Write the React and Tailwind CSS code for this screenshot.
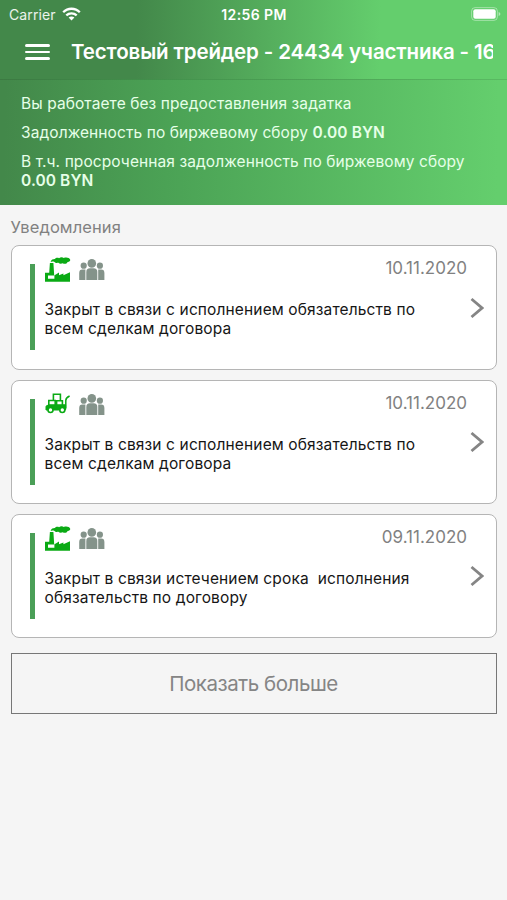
const FactoryIcon = () => (
  <svg className="h-[25px] w-[26px]" viewBox="0 0 26 25" fill="#0aaa14">
    <path
      fillRule="evenodd"
      d="M0 24.8V15.8H4.2L4.9 6H8.4L9.2 18.6L14 15.6V18.2L18.4 16.4V18.2L25 15.2V24.8ZM3 18.6V21.8H9.4V18.6Z"
    />
    <path d="M5.6 5C6.2 2.6 8 2 9.8 2C10.8 0.7 12.8 0.5 14 1.2C15.4 0 17.6 0 18.8 1C21 0 24.6 0.6 25.2 2.8C25.4 4.4 24 5 22.6 4.9C22 6.8 19.4 7.4 17.8 6.3C16 7 14.4 6.8 13.4 5.8C11.4 6.2 10.2 5.8 9.6 4.9C8 4.2 6.6 4.3 5.6 5Z" />
  </svg>
);

const LoaderIcon = () => (
  <svg className="h-[25px] w-[26px]" viewBox="0 0 26 25" fill="none" stroke="#0aaa14">
    <path d="M8.4 8.6V2.3H15.4V8.6M3.8 13.5V8.5H10.2V13.5M11.6 13.5V8.8H17.4V13.5" strokeWidth="1.6" />
    <path d="M1 18V14.2L3.6 12.8H20.6V18Z" fill="#0aaa14" />
    <path d="M20.8 16.6V8.4C20.8 6 22 5.2 24.6 4" strokeWidth="1.5" />
    <circle cx="5.5" cy="18" r="2.5" fill="#fff" strokeWidth="1.6" />
    <circle cx="17.3" cy="18" r="2.5" fill="#fff" strokeWidth="1.6" />
  </svg>
);

const GroupIcon = () => (
  <svg className="h-[25px] w-[26px]" viewBox="0 0 26 25" fill="#84938a">
    <circle cx="4.7" cy="8.7" r="3.1" />
    <circle cx="20.9" cy="8.7" r="3.1" />
    <path d="M0.2 23V16Q0.2 12.6 3.4 12.6H6.4V23ZM25.4 23V16Q25.4 12.6 22.2 12.6H19.2V23Z" />
    <circle cx="12.8" cy="6.4" r="4.3" />
    <path d="M7.3 23V15Q7.3 11.3 11 11.3H14.6Q18.3 11.3 18.3 15V23Z" />
  </svg>
);

const notifications = [
  {
    id: 1,
    icon: FactoryIcon,
    date: "10.11.2020",
    lines: ["Закрыт в связи с исполнением обязательств по", "всем сделкам договора"],
  },
  {
    id: 2,
    icon: LoaderIcon,
    date: "10.11.2020",
    lines: ["Закрыт в связи с исполнением обязательств по", "всем сделкам договора"],
  },
  {
    id: 3,
    icon: FactoryIcon,
    date: "09.11.2020",
    lines: ["Закрыт в связи истечением срока  исполнения", "обязательств по договору"],
  },
];

const StatusBar = () => (
  <div className="grid h-7 grid-cols-3 items-center pr-[6px] pl-[9px] text-[14px] text-white">
    <div className="flex items-center gap-[6px]">
      <span className="tracking-[0.1px] text-white/90">Carrier</span>
      <svg className="h-[14px] w-[19px]" viewBox="0 0 19 14" fill="none" stroke="#fff" strokeWidth="2.3">
        <path d="M1.2 5.2C5.8 0.6 13.2 0.6 17.8 5.2" />
        <path d="M4.3 8.4C7.2 5.6 11.8 5.6 14.7 8.4" />
        <path d="M9.5 13.5L6.6 10.6C8.2 9.2 10.8 9.2 12.4 10.6Z" fill="#fff" stroke="none" />
      </svg>
    </div>
    <span className="-ml-[2px] text-center font-semibold tracking-[0.4px]">12:56 PM</span>
    <svg className="h-[14px] w-[30px] justify-self-end" viewBox="0 0 30 14">
      <rect x="0.6" y="0.6" width="25.8" height="12.8" rx="3.5" fill="none" stroke="#fff" strokeOpacity="0.4" />
      <rect x="2.3" y="2.3" width="22.4" height="9.4" rx="2" fill="#fff" />
      <path d="M27.6 5V9Q29.4 8.4 29.4 7T27.6 5Z" fill="#fff" fillOpacity="0.5" />
    </svg>
  </div>
);

const Header = () => (
  <header className="h-[79px] bg-[linear-gradient(91deg,#43884a_0%,#43884a_27%,#64ce6d_75%,#64ce6d_100%)]">
    <StatusBar />
    <div className="flex h-12 items-center pr-[14.5px] pl-[25px]">
      <button className="flex w-[25px] shrink-0 flex-col gap-[4px]">
        <span className="h-[2.5px] rounded-full bg-white" />
        <span className="h-[2.5px] rounded-full bg-white" />
        <span className="h-[2.5px] rounded-full bg-white" />
      </button>
      <h1 className="ml-[21px] flex-1 overflow-hidden text-[20.5px] font-semibold tracking-[-0.13px] whitespace-nowrap text-white">
        Тестовый трейдер - 24434 участника - 16
      </h1>
    </div>
  </header>
);

const DebtPanel = () => (
  <section className="flex h-[126px] flex-col gap-[10px] border-t border-black/10 bg-[linear-gradient(91deg,#43884a_1%,#4ba255_33%,#64ce6d_98%)] pt-[14px] pl-[21px] text-[15.5px] leading-[19px] tracking-[0.09px] whitespace-nowrap text-[#e6ffe8]">
    <p>Вы работаете без предоставления задатка</p>
    <p>
      Задолженность по биржевому сбору <b className="font-semibold">0.00 BYN</b>
    </p>
    <p>
      В т.ч. просроченная задолженность по биржевому сбору
      <br />
      <b className="font-semibold">0.00 BYN</b>
    </p>
  </section>
);

const NotificationCard = ({ icon: Icon, date, lines }) => (
  <li className="flex h-[124.5px] rounded-[8px] border-[1.5px] border-[#b5b5b5] bg-white pr-[11.5px] pl-[18.5px]">
    <div className="mt-[18px] h-[86px] w-[5px] shrink-0 bg-[#4a9f57]" />
    <div className="ml-[9.5px] flex-1 pt-[11px]">
      <div className="flex justify-between">
        <div className="flex gap-[8px]">
          <Icon />
          <GroupIcon />
        </div>
        <span className="text-[17px] leading-[23px] text-[#818181]">{date}</span>
      </div>
      <p className="mt-[18px] text-[15.5px] leading-[19px] tracking-[0.13px] whitespace-pre text-[#161616]">
        {lines[0]}
        <br />
        {lines[1]}
      </p>
    </div>
    <svg className="mt-[50.5px] ml-[3px] h-[22px] w-[14px] shrink-0" viewBox="0 0 14 22" fill="none" stroke="#858585" strokeWidth="2.8">
      <path d="M1.5 2L12 11L1.5 20" />
    </svg>
  </li>
);

export default function App() {
  return (
    <div className="h-[900px] w-[507px] overflow-hidden bg-[#f5f5f5] font-['Inter','Liberation_Sans',sans-serif]">
      <Header />
      <DebtPanel />
      <main className="px-[10.5px] pt-[11px]">
        <h2 className="text-[16.5px] leading-[22px] tracking-[0.09px] text-[#818181]">Уведомления</h2>
        <ul className="mt-[7.2px] flex flex-col gap-[9.9px]">
          {notifications.map((item) => (
            <NotificationCard key={item.id} {...item} />
          ))}
        </ul>
        <button className="mt-[15px] h-[61px] w-full border border-[#777] text-[20.5px] tracking-[-0.45px] text-[#858585]">
          Показать больше
        </button>
      </main>
    </div>
  );
}
